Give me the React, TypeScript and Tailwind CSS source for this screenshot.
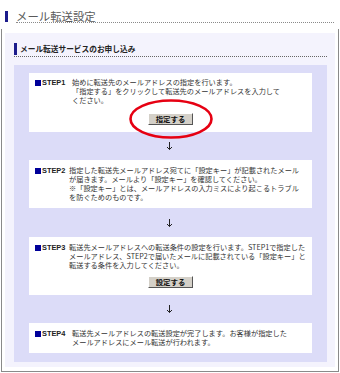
import React from "react";

const jp = { fontFamily: '"Noto Sans CJK JP", "Noto Sans", sans-serif' };

function Arrow({ h }: { h: string }) {
  return (
    <div className={`flex items-center justify-center ${h}`}>
      <svg width="7" height="8" viewBox="0 0 7 8" className="ml-[-2px]">
        <path d="M3.5 0 V7.5 M1 5 L3.5 7.5 L6 5" stroke="#222" strokeWidth="1" fill="none" />
      </svg>
    </div>
  );
}

function Button({ label }: { label: string }) {
  return (
    <span className="flex items-center justify-center w-[45px] h-[12px] bg-[#d4d0c8] border-t border-l border-t-white border-l-white border-b border-r border-b-[#555] border-r-[#555] text-[7.4px] font-bold text-[#111] leading-none">
      {label}
    </span>
  );
}

function Step({
  no,
  pad,
  labelW,
  children,
  button,
}: {
  no: number;
  pad: string;
  labelW: string;
  children: React.ReactNode;
  button?: React.ReactNode;
}) {
  return (
    <div className={`bg-white ${pad}`}>
      <div className="flex pl-[6px] leading-[9px]">
        <div className={`${labelW} shrink-0 flex items-center h-[9px]`}>
          <span className="inline-block w-[6px] h-[6px] bg-[#000099]" />
          <span
            className="ml-[1px] text-[7.4px] font-bold text-[#222]"
            style={{ fontFamily: '"Liberation Sans", Arial, sans-serif' }}
          >
            STEP{no}
          </span>
        </div>
        <div className="text-[7.2px] text-[#333] whitespace-nowrap">{children}</div>
      </div>
      {button}
    </div>
  );
}

export default function App() {
  return (
    <div className="w-[340px] h-[373px] bg-white overflow-hidden" style={jp}>
      <div className="h-[29px] flex items-start pt-[10px] pl-[5px] pr-[6px]">
        <div className="w-[3px] h-[11px] bg-[#1c1c8c] mt-[1px]" />
        <div className="ml-[8px] flex-1 h-[13px] border-b border-dotted border-[#8a8a8a]">
          <span className="text-[11.4px] leading-[12px] text-[#5a5a5a] block">メール転送設定</span>
        </div>
      </div>

      <div className="mx-[1px] border-l border-r border-b border-[#8a8a8a] pt-[4px] px-[3px] pb-[4px]">
        <div className="bg-[#f4f3fd] pt-[10px] pl-[9px] pr-[8px] pb-[5px]">
          <div className="h-[14px] flex items-start border-b border-dotted border-[#666]">
            <div className="w-[3px] h-[12px] bg-[#1c1c8c]" />
            <span className="ml-[3px] text-[7.7px] leading-[12px] font-bold text-[#222]">
              メール転送サービスのお申し込み
            </span>
          </div>

          <div className="mt-[8px] bg-[#dcdcf8] px-[15px] pt-[8px] pb-[9px]">
            <Step
              no={1}
              pad="pt-[5px] pb-[7px]"
              labelW="w-[37px]"
              button={
                <div className="mt-[8px] flex justify-center">
                  <div className="relative flex">
                    <Button label="指定する" />
                    <svg
                      width="84"
                      height="40"
                      viewBox="0 0 84 40"
                      className="absolute left-[-19px] top-[-14px] pointer-events-none"
                    >
                      <ellipse cx="42" cy="20" rx="40.5" ry="18.5" stroke="#e60012" strokeWidth="2.6" fill="none" />
                    </svg>
                  </div>
                </div>
              }
            >
              始めに転送先のメールアドレスの指定を行います。
              <br />
              「指定する」をクリックして転送先のメールアドレスを入力して
              <br />
              ください。
            </Step>

            <Arrow h="h-[28px]" />

            <Step no={2} pad="pt-[6px] pb-[6px]" labelW="w-[34px]">
              指定した転送先メールアドレス宛てに「設定キー」が記載されたメール
              <br />
              が届きます。メールより「設定キー」を確認してください。
              <br />
              ※「設定キー」とは、メールアドレスの入力ミスにより起こるトラブル
              <br />
              を防ぐためのものです。
            </Step>

            <Arrow h="h-[29px]" />

            <Step
              no={3}
              pad="pt-[6px] pb-[7px]"
              labelW="w-[34px]"
              button={
                <div className="mt-[6px] flex justify-center">
                  <Button label="設定する" />
                </div>
              }
            >
              転送先メールアドレスへの転送条件の設定を行います。STEP1で指定した
              <br />
              メールアドレス、STEP2で届いたメールに記載されている「設定キー」と
              <br />
              転送する条件を入力してください。
            </Step>

            <Arrow h="h-[28px]" />

            <Step no={4} pad="pt-[6px] pb-[6px]" labelW="w-[37px]">
              転送先メールアドレスの転送設定が完了します。お客様が指定した
              <br />
              メールアドレスにメール転送が行われます。
            </Step>
          </div>
        </div>
      </div>
    </div>
  );
}
